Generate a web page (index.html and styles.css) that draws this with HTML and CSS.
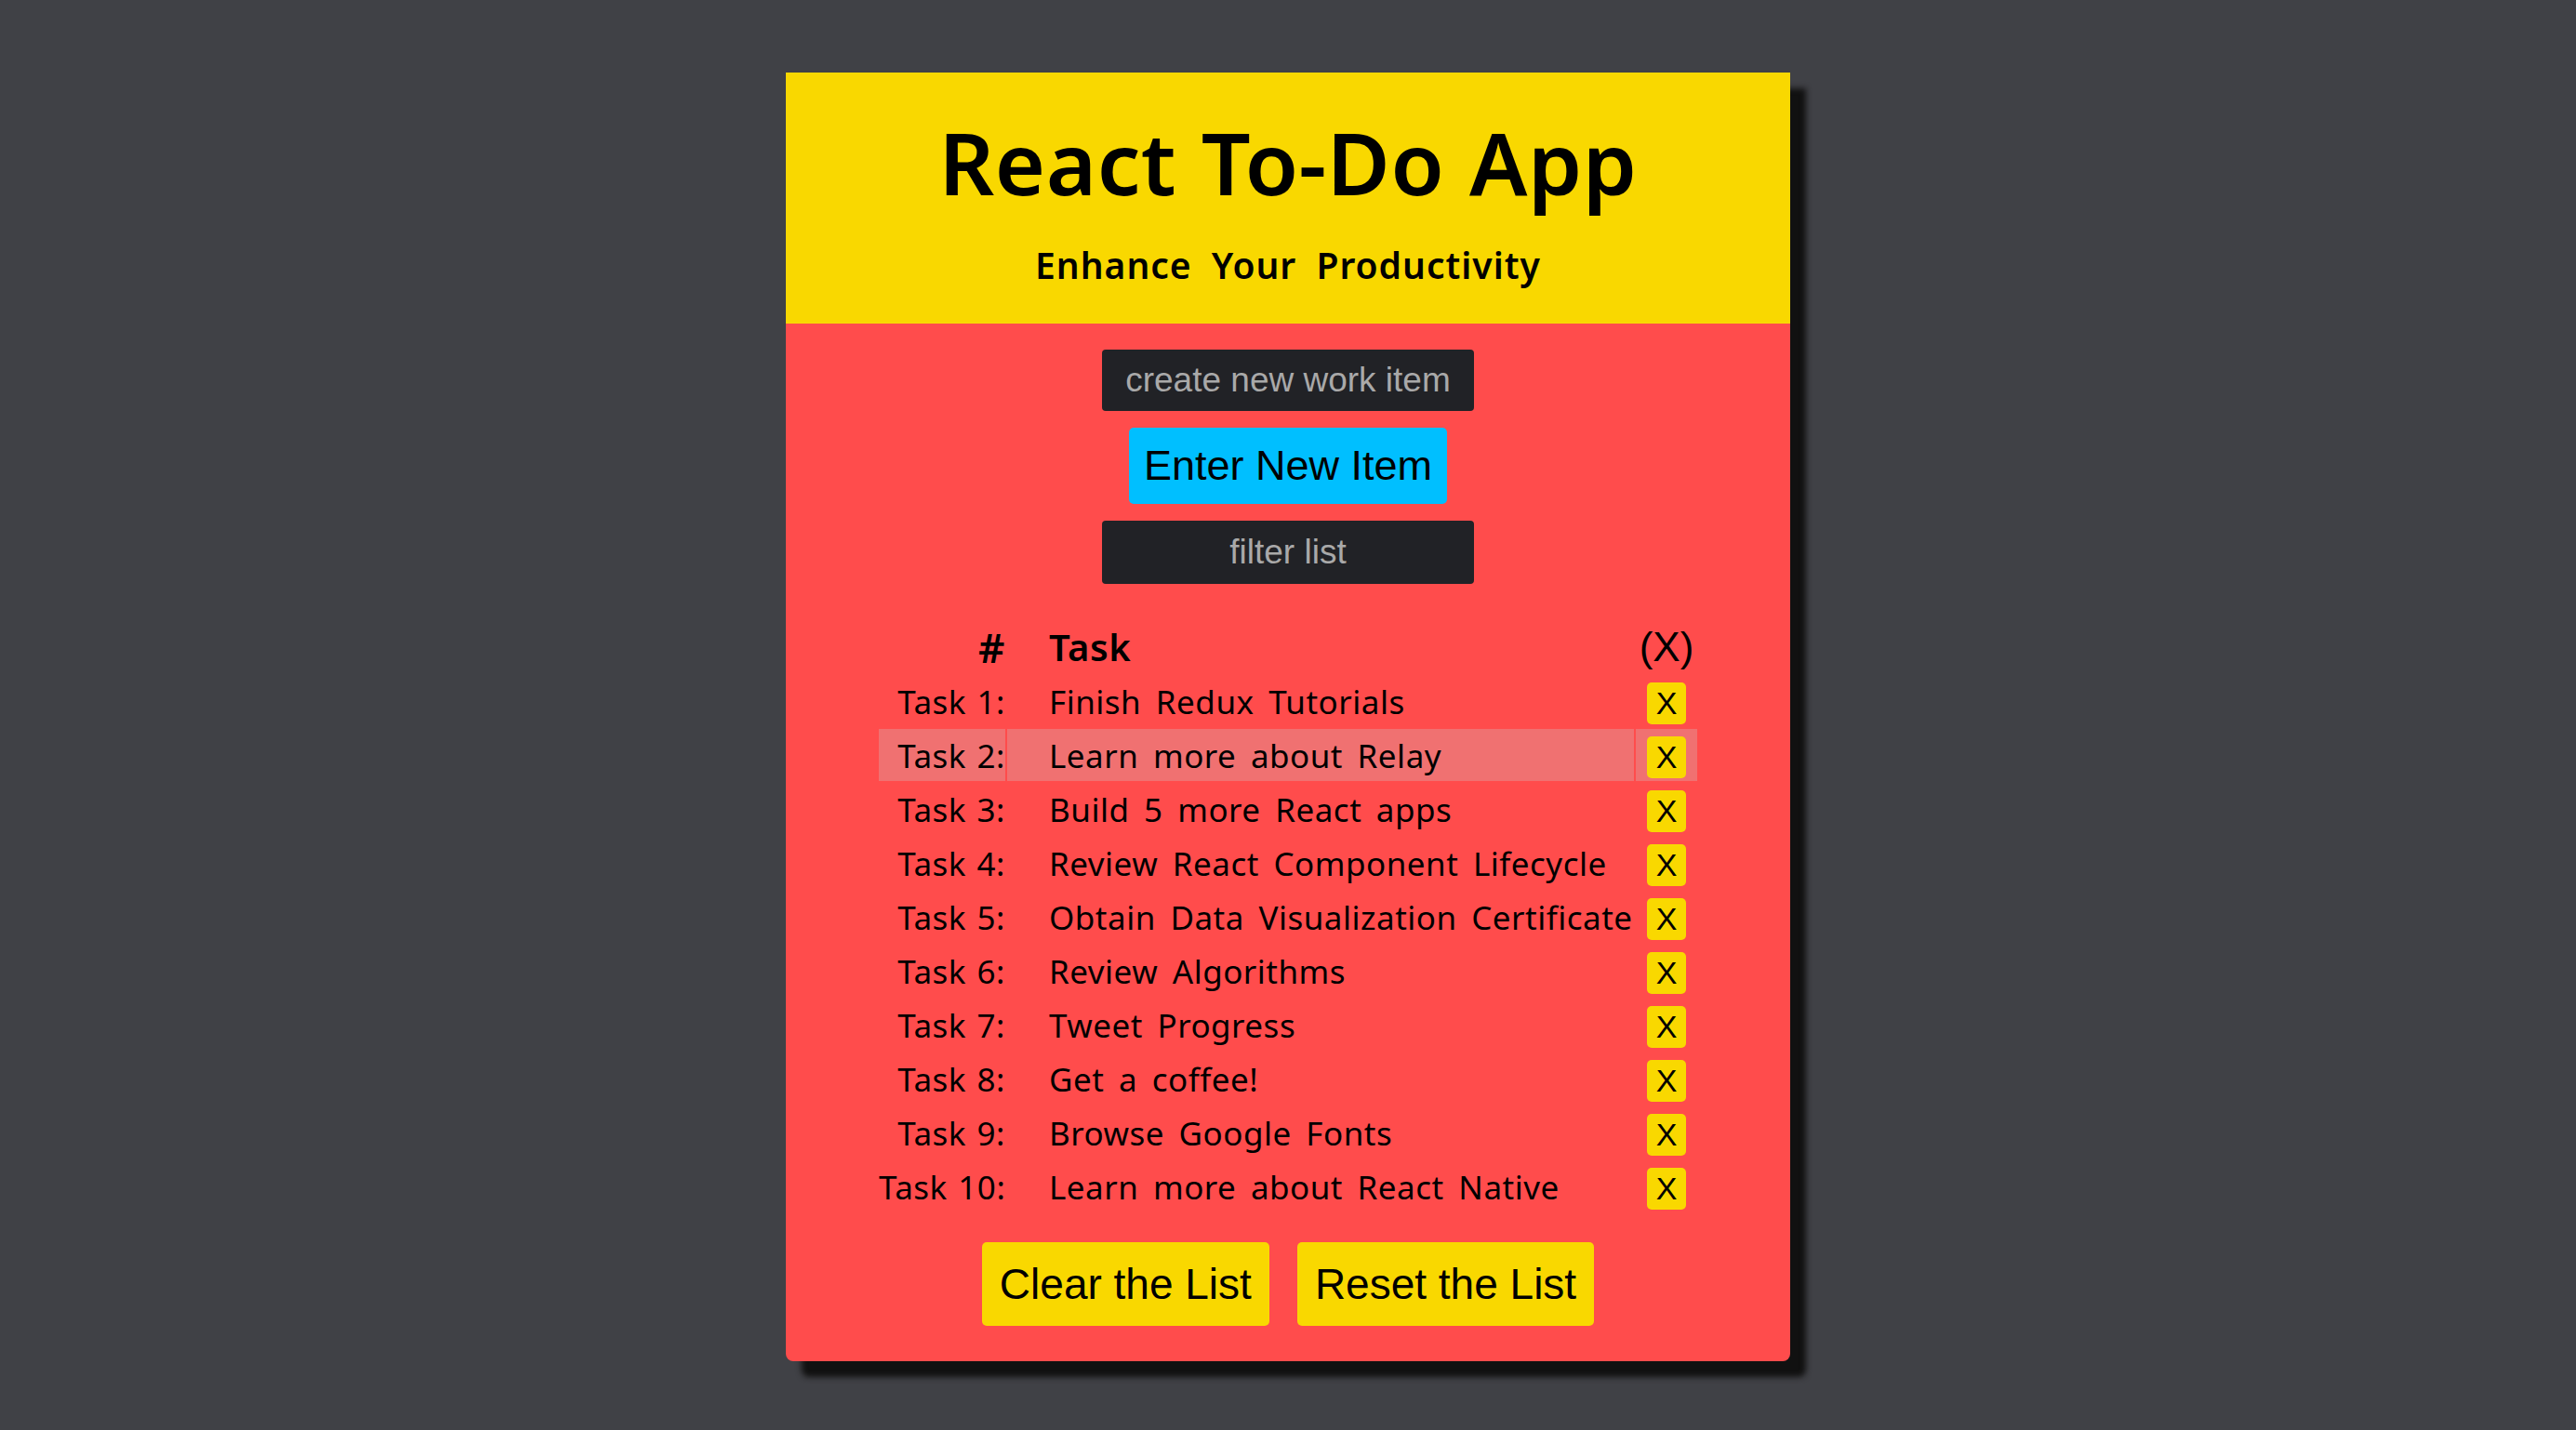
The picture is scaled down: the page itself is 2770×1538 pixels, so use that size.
FILE: index.html
```html
<!DOCTYPE html>
<html lang="en">
	<head>
		<title>React To-Do App</title>
		<meta charset="utf-8">
		<link rel="stylesheet" href="styles.css">
	</head>

	<body>
		<div class="app">

			<div class="app-header">
				<h1 class="title">React To-Do App</h1>
				<h2 class="subtitle">Enhance Your Productivity</h2>
			</div>

			<div class="app-body">

				<div class="controls">
					<input class="field field-new" type="text" placeholder="create new work item" />
					<button class="btn-enter">Enter New Item</button>
					<input class="field field-filter" type="text" placeholder="filter list" />
				</div>

				<table class="tasks">
					<colgroup>
						<col class="col-num">
						<col class="col-task">
						<col class="col-del">
					</colgroup>
					<thead>
						<tr>
							<th class="num">#</th>
							<th class="task">Task</th>
							<th class="del">(X)</th>
						</tr>
					</thead>
					<tbody>
						<tr><td class="num">Task 1:</td><td class="task">Finish Redux Tutorials</td><td class="del"><button class="btn-x">X</button></td></tr>
						<tr class="hover"><td class="num">Task 2:</td><td class="task">Learn more about Relay</td><td class="del"><button class="btn-x">X</button></td></tr>
						<tr><td class="num">Task 3:</td><td class="task">Build 5 more React apps</td><td class="del"><button class="btn-x">X</button></td></tr>
						<tr><td class="num">Task 4:</td><td class="task">Review React Component Lifecycle</td><td class="del"><button class="btn-x">X</button></td></tr>
						<tr><td class="num">Task 5:</td><td class="task">Obtain Data Visualization Certificate</td><td class="del"><button class="btn-x">X</button></td></tr>
						<tr><td class="num">Task 6:</td><td class="task">Review Algorithms</td><td class="del"><button class="btn-x">X</button></td></tr>
						<tr><td class="num">Task 7:</td><td class="task">Tweet Progress</td><td class="del"><button class="btn-x">X</button></td></tr>
						<tr><td class="num">Task 8:</td><td class="task">Get a coffee!</td><td class="del"><button class="btn-x">X</button></td></tr>
						<tr><td class="num">Task 9:</td><td class="task">Browse Google Fonts</td><td class="del"><button class="btn-x">X</button></td></tr>
						<tr><td class="num">Task 10:</td><td class="task">Learn more about React Native</td><td class="del"><button class="btn-x">X</button></td></tr>
					</tbody>
				</table>

				<div class="actions">
					<button class="btn-list">Clear the List</button>
					<button class="btn-list">Reset the List</button>
				</div>

			</div>
		</div>
	</body>
</html>
```

FILE: styles.css
```css
body {
	background: #404146;
	margin: 0;
	padding: 78px 0 60px;
	font-family: "Noto Sans", "Lato", sans-serif;
	color: #000;
}

.app {
	width: 1080px;
	margin: 0 auto;
	background: #ff4c4c;
	border-radius: 0 0 8px 8px;
	box-shadow: 17px 17px 6px #111;
}

.app-header {
	background: #f9d800;
	padding: 41px 0 40px;
	text-align: center;
}

.title {
	margin: 0;
	font-size: 93px;
	font-weight: 600;
	line-height: 1.2;
	letter-spacing: 0.5px;
	word-spacing: 2px;
}

.subtitle {
	margin: 31px 0 0;
	font-size: 39px;
	font-weight: 600;
	line-height: 1.2;
	letter-spacing: 1px;
	word-spacing: 10px;
}

.app-body {
	padding: 28px 0 38px;
}

.controls {
	display: flex;
	flex-direction: column;
	align-items: center;
	gap: 18px;
}

.field {
	box-sizing: border-box;
	width: 400px;
	height: 66px;
	border: none;
	border-radius: 4px;
	background: #212226;
	color: #ddd;
	font-family: "Liberation Sans", Arial, sans-serif;
	font-size: 37px;
	text-align: center;
	outline: none;
}

.field-filter {
	height: 68px;
}

.field::placeholder {
	color: #a9a9a9;
}

.btn-enter {
	height: 82px;
	padding: 0 16px;
	border: none;
	border-radius: 5px;
	background: #00bfff;
	color: #000;
	font-family: "Liberation Sans", Arial, sans-serif;
	font-size: 45px;
}

.tasks {
	table-layout: fixed;
	width: 884px;
	margin: 38px auto 0;
	border-spacing: 2px;
	font-size: 35px;
	letter-spacing: 0.5px;
	word-spacing: 6px;
}

.col-num { width: 136px; }
.col-task { width: 674px; }
.col-del { width: 66px; }

.tasks th,
.tasks td {
	height: 56px;
	padding: 0;
	white-space: nowrap;
	vertical-align: middle;
}

.tasks th {
	font-size: 40px;
	font-weight: 600;
	line-height: 50px;
}

.tasks .num {
	text-align: right;
	word-spacing: 2px;
}

.tasks th.num {
	font-size: 44px;
}

.tasks .task {
	text-align: left;
	padding-left: 45px;
}

.tasks .del {
	text-align: center;
	letter-spacing: 0;
}

.tasks th.del {
	font-family: "Liberation Sans", Arial, sans-serif;
	font-weight: 400;
	font-size: 44px;
}

.tasks tr.hover td {
	background: #f07171;
}

.btn-x {
	width: 42px;
	height: 45px;
	padding: 0;
	border: none;
	border-radius: 5px;
	background: #f9d800;
	color: #000;
	font-family: "Liberation Sans", Arial, sans-serif;
	font-size: 34px;
	line-height: 45px;
	vertical-align: middle;
}

.actions {
	display: flex;
	justify-content: center;
	gap: 30px;
	margin-top: 30px;
}

.btn-list {
	height: 90px;
	padding: 0 19px;
	border: none;
	border-radius: 5px;
	background: #f9d800;
	color: #000;
	font-family: "Liberation Sans", Arial, sans-serif;
	font-size: 46px;
}
```
